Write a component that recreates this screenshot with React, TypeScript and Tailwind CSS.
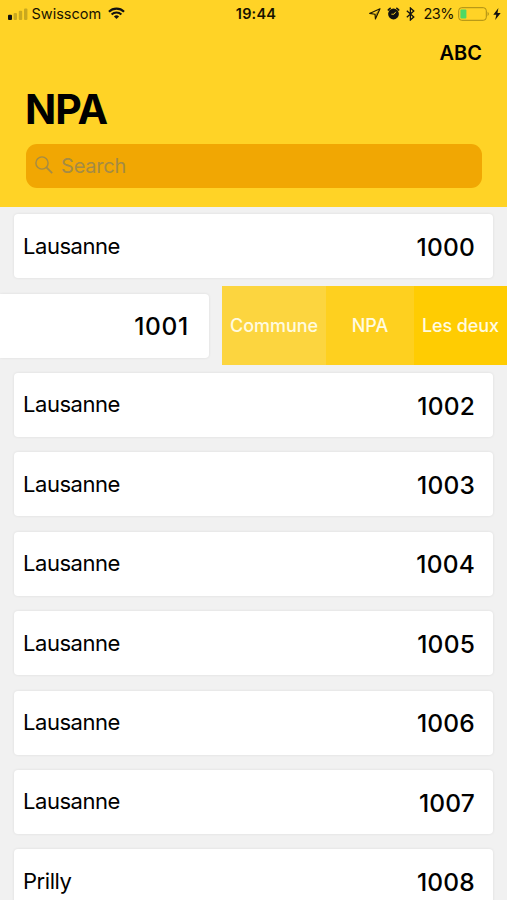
import React from "react";

type Town = { name: string; code: string };

const towns: Town[] = [
  { name: "Lausanne", code: "1000" },
  { name: "Lausanne", code: "1001" },
  { name: "Lausanne", code: "1002" },
  { name: "Lausanne", code: "1003" },
  { name: "Lausanne", code: "1004" },
  { name: "Lausanne", code: "1005" },
  { name: "Lausanne", code: "1006" },
  { name: "Lausanne", code: "1007" },
  { name: "Prilly", code: "1008" },
];

const SignalIcon = () => (
  <svg width="20" height="14" viewBox="0 0 20 14">
    <rect x="0" y="7.8" width="4" height="5.2" rx="1" fill="#111" />
    <rect x="5.6" y="6" width="3.4" height="7" rx="1" fill="#c9a81f" />
    <rect x="10.8" y="3.8" width="3.4" height="9.2" rx="1" fill="#c9a81f" />
    <rect x="16" y="1.4" width="3.4" height="11.6" rx="1" fill="#c9a81f" />
  </svg>
);

const WifiIcon = () => (
  <svg width="17" height="13" viewBox="0 0 18 13">
    <path d="M1 4.6a11.4 11.4 0 0 1 16 0" fill="none" stroke="#111" strokeWidth="2.2" />
    <path d="M3.8 7.5a7.4 7.4 0 0 1 10.4 0" fill="none" stroke="#111" strokeWidth="2.1" />
    <path d="M9 12.4 6.3 9.7a3.8 3.8 0 0 1 5.4 0z" fill="#111" />
  </svg>
);

const LocationIcon = () => (
  <svg width="12" height="12" viewBox="0 0 12 12">
    <path d="M11 .8 .6 5.4l5.4.8.4 4.8z" fill="none" stroke="#1a1603" strokeWidth="1.1" strokeLinejoin="round" />
    <path d="M11 .8 6 6.2l.4 4.8z" fill="#1a1603" fillOpacity=".35" />
  </svg>
);

const AlarmIcon = () => (
  <svg width="13" height="13" viewBox="0 0 13 13">
    <circle cx="6.5" cy="7" r="5.4" fill="#111" />
    <path d="M.9 3.5A8 8 0 0 1 3.7 1M12.1 3.5A8 8 0 0 0 9.3 1" fill="none" stroke="#111" strokeWidth="1.5" />
    <path d="M4.4 7.2H7L8.8 4.8" fill="none" stroke="#ffd426" strokeWidth=".9" />
  </svg>
);

const BluetoothIcon = () => (
  <svg width="9" height="14" viewBox="0 0 9 14">
    <path d="M.8 3.8 7.8 9.9 4.4 13V1l3.4 3.1-7 6.1" fill="none" stroke="#111" strokeWidth="1.3" />
  </svg>
);

const BatteryIcon = () => (
  <svg width="33" height="14" viewBox="0 0 33 14">
    <rect x=".7" y=".7" width="27.6" height="12.6" rx="3" fill="none" stroke="#a98c14" strokeWidth="1" />
    <rect x="2.4" y="2.4" width="6" height="9.2" rx="1" fill="#4cd964" />
    <path d="M29.6 4.8q2.4 2.2 0 4.4z" fill="#a98c14" />
  </svg>
);

const BoltIcon = () => (
  <svg width="8" height="12" viewBox="0 0 8 12">
    <path d="M5.4 0 .3 6.8h3L2.2 12l5.5-7H4.5z" fill="#111" />
  </svg>
);

const SearchIcon = () => (
  <svg width="19" height="19" viewBox="0 0 19 19">
    <circle cx="7" cy="7" r="6.1" fill="none" stroke="#a48b45" strokeWidth="1.4" />
    <path d="m11.4 11.4 5.8 5.8" stroke="#a48b45" strokeWidth="1.8" />
  </svg>
);

const StatusBar = () => (
  <div className="grid h-[27px] grid-cols-[1fr_auto_1fr] items-center pl-2 pr-[6px] text-[14.5px] leading-none text-[#171200]">
    <div className="flex items-center">
      <SignalIcon />
      <span className="ml-[3.5px] pt-px">Swisscom</span>
      <span className="ml-[7px]">
        <WifiIcon />
      </span>
    </div>
    <span className="pl-[3px] pt-px font-semibold tracking-[0.2px]">19:44</span>
    <div className="flex items-center justify-end">
      <LocationIcon />
      <span className="ml-[6px]">
        <AlarmIcon />
      </span>
      <span className="ml-[6px]">
        <BluetoothIcon />
      </span>
      <span className="ml-2 pt-px tracking-[-0.5px]">23%</span>
      <span className="ml-1">
        <BatteryIcon />
      </span>
      <span className="ml-[2px]">
        <BoltIcon />
      </span>
    </div>
  </div>
);

const Header = () => (
  <header className="h-[206.5px] shrink-0 bg-[#ffd326]">
    <StatusBar />
    <div className="flex h-[51px] items-center justify-end pr-[25px] text-[20px] font-semibold">
      ABC
    </div>
    <h1 className="h-[66px] pl-[25px] pt-[6px] text-[41px] font-bold leading-[50px] tracking-[-1px]">NPA</h1>
    <div className="ml-[25.5px] mr-[25px] flex h-[43.5px] items-center rounded-[11px] bg-[#f1a703] pl-[9.5px] text-[#a48b45]">
      <SearchIcon />
      <span className="ml-[7px] text-[20px] leading-none tracking-[-0.2px]">Search</span>
    </div>
  </header>
);

const Card = ({ name, code }: Town) => (
  <div className="mx-[14px] flex h-[64px] flex-1 items-center justify-between rounded-[4px] bg-white pl-[9px] pr-[18px] shadow-[0_0_3px_rgba(0,0,0,0.09)]">
    <span className="text-[22px] tracking-[-0.45px]">{name}</span>
    <span className="pt-[2px] text-[24.5px] font-medium tracking-[0.2px]">{code}</span>
  </div>
);

// row slid to the left, only the code is still on screen
const SwipedCard = ({ code }: { code: string }) => (
  <div className="mr-[13px] flex h-[64px] flex-1 items-center justify-end rounded-r-[4px] bg-white pr-[20px] shadow-[0_0_3px_rgba(0,0,0,0.09)]">
    <span className="pt-[2px] text-[24.5px] font-medium tracking-[0.7px]">{code}</span>
  </div>
);

const SwipeActions = () => (
  <div className="flex h-full w-[285px] shrink-0 text-[18px] font-medium text-[#fffbe0]">
    <div className="flex w-[104px] items-center justify-center bg-[#fcd53f] tracking-[-0.05px]">Commune</div>
    <div className="flex w-[88px] items-center justify-center bg-[#fed01f]">NPA</div>
    <div className="flex w-[93px] items-center justify-center bg-[#ffcc02] tracking-[-0.1px]">Les deux</div>
  </div>
);

export default function App() {
  return (
    <div className="flex h-[900px] w-[507px] flex-col overflow-hidden bg-[#f1f1f1] font-['Inter',sans-serif] text-black">
      <Header />
      <main>
        {towns.map((town) =>
          town.code === "1001" ? (
            <div key={town.code} className="flex h-[79.4px] items-center">
              <SwipedCard code={town.code} />
              <SwipeActions />
            </div>
          ) : (
            <div key={town.code} className="flex h-[79.4px] items-center">
              <Card {...town} />
            </div>
          )
        )}
      </main>
    </div>
  );
}
